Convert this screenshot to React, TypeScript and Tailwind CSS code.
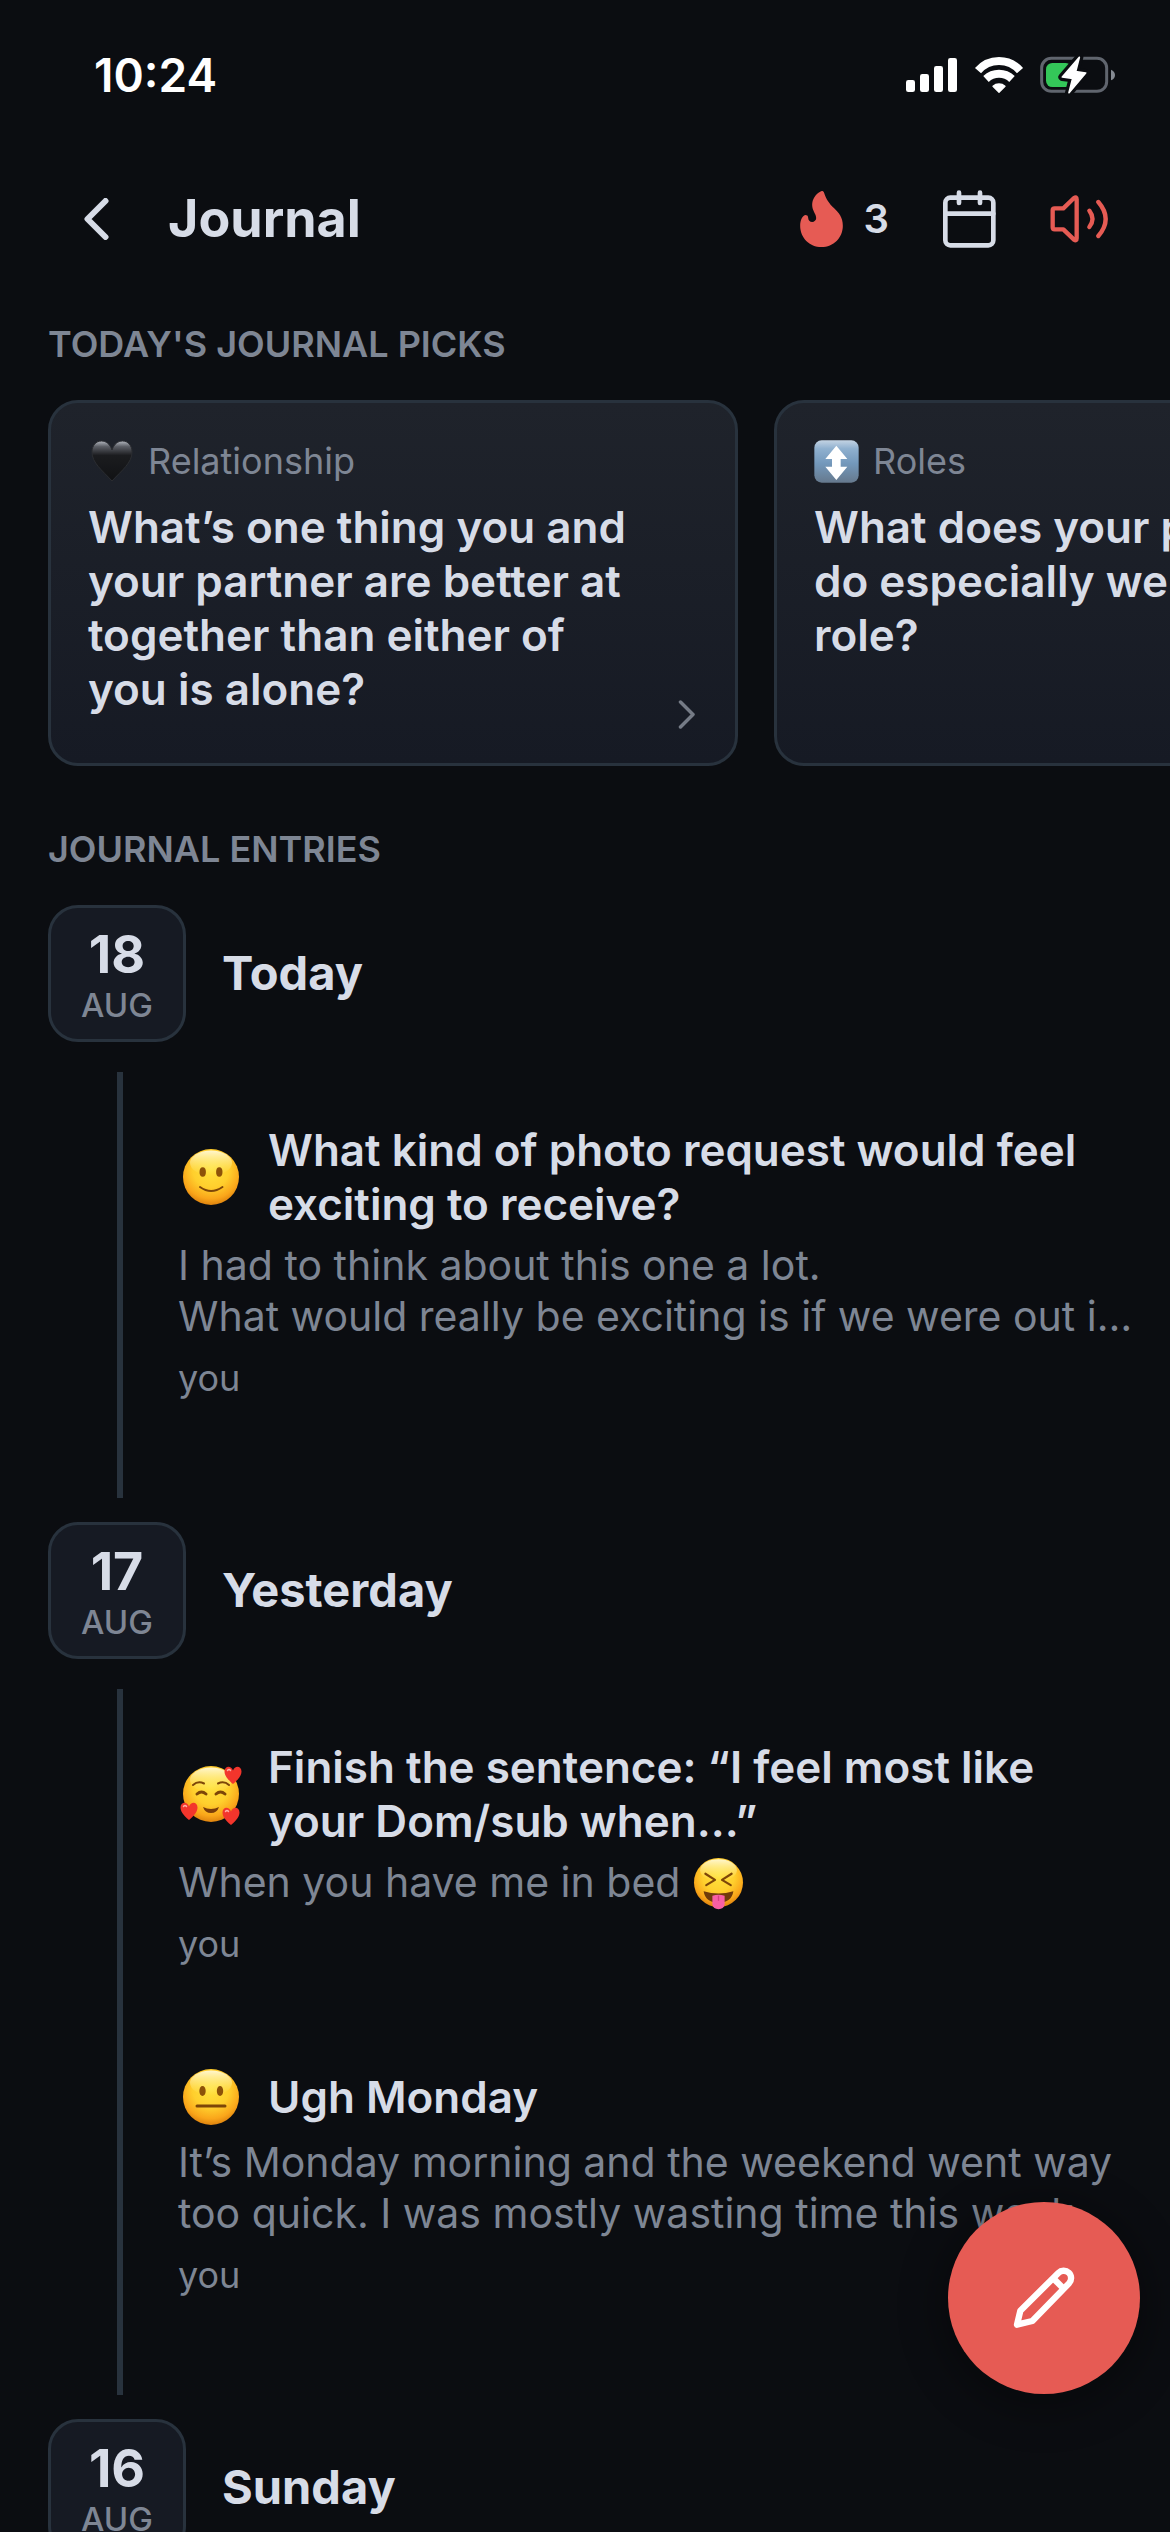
import React from 'react';

type Mood = 'smile' | 'loved' | 'neutral' | 'tongue';

interface Entry {
  mood: Mood;
  title: string[];
  body: string[];
  trailing?: Mood;
  author: string;
}

interface Day {
  day: string;
  month: string;
  label: string;
  entries: Entry[];
}

const DAYS: Day[] = [
  {
    day: '18',
    month: 'AUG',
    label: 'Today',
    entries: [
      {
        mood: 'smile',
        title: ['What kind of photo request would feel', 'exciting to receive?'],
        body: ['I had to think about this one a lot.', 'What would really be exciting is if we were out i…'],
        author: 'you',
      },
    ],
  },
  {
    day: '17',
    month: 'AUG',
    label: 'Yesterday',
    entries: [
      {
        mood: 'loved',
        title: ['Finish the sentence: “I feel most like', 'your Dom/sub when...”'],
        body: ['When you have me in bed'],
        trailing: 'tongue',
        author: 'you',
      },
      {
        mood: 'neutral',
        title: ['Ugh Monday'],
        body: ['It’s Monday morning and the weekend went way', 'too quick. I was mostly wasting time this week.'],
        author: 'you',
      },
    ],
  },
  { day: '16', month: 'AUG', label: 'Sunday', entries: [] },
];

const PICKS = [
  {
    icon: 'heart',
    category: 'Relationship',
    lines: ['What’s one thing you and', 'your partner are better at', 'together than either of', 'you is alone?'],
  },
  {
    icon: 'arrows',
    category: 'Roles',
    lines: ['What does your partner', 'do especially well in their', 'role?'],
  },
];

const StatusIcons = () => (
  <div className="flex items-center gap-[17px]">
    <svg width="51" height="36" viewBox="0 0 153 108" fill="#fff" aria-hidden="true">
      <rect x="0" y="69" width="27" height="36" rx="7" />
      <rect x="42" y="51" width="27" height="54" rx="7" />
      <rect x="84" y="27" width="27" height="78" rx="7" />
      <rect x="126" y="3" width="27" height="102" rx="7" />
    </svg>
    <svg width="49" height="36" viewBox="642 105 147 108" className="overflow-visible" aria-hidden="true">
      <g fill="none" stroke="#fff" strokeWidth="24">
        <path d="M654 146A83 83 0 0 1 780 146" />
        <path d="M678 171A57 57 0 0 1 756 171" />
      </g>
      <path d="M717 211L699 193A27 27 0 0 1 735 193Z" fill="#fff" stroke="#fff" strokeWidth="4" strokeLinejoin="round" />
    </svg>
    <svg width="76" height="40" viewBox="840 102 228 120" aria-hidden="true">
      <rect x="845" y="112" width="195" height="99" rx="29" fill="none" stroke="#60656e" strokeWidth="9" />
      <path d="M1053 146c8 3 12 9 12 16s-4 13-12 16z" fill="#858a93" />
      <rect x="858" y="126" width="78" height="72" rx="19" fill="#34c759" />
      <path
        d="M958 109L907 168L938 172L927 215L977 156L947 152Z"
        fill="#0b0d11"
        stroke="#0b0d11"
        strokeWidth="24"
        strokeLinejoin="round"
      />
      <path
        d="M958 109L907 168L938 172L927 215L977 156L947 152Z"
        fill="#fff"
        stroke="#fff"
        strokeWidth="5"
        strokeLinejoin="round"
      />
    </svg>
  </div>
);

const FlameIcon = () => (
  <svg width="43" height="56" viewBox="112 518 128 168" fill="#e65b54" aria-hidden="true">
    <path d="M172 520C158 528 148 542 148 560C148 578 160 586 160 600C160 606 154 611 148 611C141 611 136 605 136 598C136 592 132 590 127 590C119 592 112 606 112 622C112 658 140 686 176 686C212 686 240 658 240 622C240 598 228 583 214 570C198 555 190 542 184 524C182 518 177 517 172 520Z" />
  </svg>
);

const CalendarIcon = () => (
  <svg
    width="53"
    height="58"
    viewBox="543 512 159 174"
    fill="none"
    stroke="#d7dce7"
    strokeWidth="14"
    strokeLinecap="round"
    aria-hidden="true"
  >
    <rect x="550" y="535" width="144" height="143" rx="15" />
    <path d="M550 583H694M591 520V551M654 520V551" />
  </svg>
);

const SpeakerIcon = () => (
  <svg
    width="59"
    height="48"
    viewBox="868 527 177 144"
    fill="none"
    stroke="#e65b54"
    strokeWidth="13"
    strokeLinecap="round"
    strokeLinejoin="round"
    aria-hidden="true"
  >
    <path d="M882 567H908L940 536Q948 531 948 540V657Q948 666 940 661L908 630H882Q876 630 876 624V573Q876 567 882 567Z" />
    <path d="M986 574Q1005 599 986 623" />
    <path d="M1013 548Q1057 599 1013 650" />
  </svg>
);

const PencilIcon = () => (
  <svg
    width="62"
    height="62"
    viewBox="459 381 186 186"
    fill="none"
    stroke="#fff"
    strokeWidth="19"
    strokeLinecap="round"
    strokeLinejoin="round"
    aria-hidden="true"
  >
    <path d="M471 554L481 512L595 399A22 22 0 0 1 627 430L517 543Z" />
    <path d="M581 416L609 444" strokeLinecap="butt" />
  </svg>
);

const HeartEmoji = () => (
  <svg width="46" height="44" viewBox="0 0 46 44" aria-hidden="true">
    <defs>
      <linearGradient id="heart" x1="0" y1="0" x2="0" y2="1">
        <stop offset="0" stopColor="#b4b8c0" />
        <stop offset="0.14" stopColor="#5b5e65" />
        <stop offset="0.36" stopColor="#1b1c1f" />
        <stop offset="1" stopColor="#111214" />
      </linearGradient>
    </defs>
    <path
      d="M24 11C22 5 18 2 13.500 2C8 2 4 6.500 4 13C4 24 14 31 24 42C34 31 44 24 44 13C44 6.500 40 2 34.500 2C30 2 26 5 24 11Z"
      fill="url(#heart)"
      stroke="#2b2d31"
      strokeWidth="1"
    />
  </svg>
);

const ArrowsEmoji = () => (
  <svg width="45" height="43" viewBox="228 177 135 129" aria-hidden="true">
    <defs>
      <linearGradient id="arrows" x1="0" y1="0" x2="0" y2="1">
        <stop offset="0" stopColor="#c3d3e3" />
        <stop offset="0.2" stopColor="#8fb0cf" />
        <stop offset="0.55" stopColor="#7398bb" />
        <stop offset="1" stopColor="#66798d" />
      </linearGradient>
    </defs>
    <rect x="229" y="178" width="133" height="127" rx="22" fill="url(#arrows)" />
    <path d="M295 194L328 234H308V257H328L295 297L262 257H282V234H262Z" fill="#fff" />
  </svg>
);

const heartPath = 'M0 9C-6 4-8.500 0-8.500-3.500C-8.500-9-2-10 0-4.500C2-10 8.500-9 8.500-3.500C8.500 0 6 4 0 9Z';

const FaceEmoji = ({ mood, size }: { mood: Mood; size: number }) => {
  const fill = `face-${mood}`;
  return (
    <svg width={size} height={size} viewBox="0 0 56 56" className="shrink-0 overflow-visible" aria-hidden="true">
      <defs>
        <radialGradient id={fill} cx="0.5" cy="0.36" r="0.66">
          <stop offset="0" stopColor="#ffe23e" />
          <stop offset="0.5" stopColor="#ffcf2d" />
          <stop offset="0.8" stopColor="#faa61a" />
          <stop offset="1" stopColor="#d97c0c" />
        </radialGradient>
        <linearGradient id={`${fill}-shine`} x1="0" y1="0" x2="0" y2="1">
          <stop offset="0" stopColor="#fffbe0" stopOpacity="0.9" />
          <stop offset="1" stopColor="#fff176" stopOpacity="0" />
        </linearGradient>
      </defs>
      <circle cx="28" cy="28" r="28" fill={`url(#${fill})`} />
      <ellipse cx="28" cy="14" rx="21" ry="12.500" fill={`url(#${fill}-shine)`} />
      {mood === 'smile' && (
        <>
          <ellipse cx="19.700" cy="23" rx="3.200" ry="4.700" fill="#8d5208" />
          <ellipse cx="36.300" cy="23" rx="3.200" ry="4.700" fill="#8d5208" />
          <path d="M17 38Q28 46 39.500 38" fill="none" stroke="#7d4608" strokeWidth="2" strokeLinecap="round" />
        </>
      )}
      {mood === 'neutral' && (
        <>
          <ellipse cx="19.500" cy="22" rx="3.200" ry="5" fill="#8d5208" />
          <ellipse cx="37" cy="22" rx="3.200" ry="5" fill="#8d5208" />
          <path d="M14 37H42" stroke="#7d4608" strokeWidth="3" strokeLinecap="round" />
        </>
      )}
      {mood === 'loved' && (
        <>
          <g fill="none" stroke="#7d4608" strokeLinecap="round">
            <path d="M10 19Q15 14.500 21 17.500M35 17.500Q41 14.500 46 19" strokeWidth="2" />
            <path d="M14 28Q18.500 24 23 28M33 28Q37.500 24 42 28" strokeWidth="3" />
          </g>
          <path d="M20 41Q28 45 36 41Q34 47 28 47Q22 47 20 41Z" fill="#7a3c0a" />
          {[
            [50, 9],
            [6, 45],
            [48, 50],
          ].map(([x, y]) => (
            <g key={x} transform={`translate(${x} ${y})`}>
              <path d={heartPath} fill="#f3352c" />
              <path d="M-5.500-4.500Q-4-6.500-2.500-4.500" stroke="#ffb0a8" strokeWidth="1.500" fill="none" strokeLinecap="round" />
            </g>
          ))}
        </>
      )}
      {mood === 'tongue' && (
        <>
          <path
            d="M13 18L24 25L14 31M43 18L32 25L42 31"
            fill="none"
            stroke="#7d4608"
            strokeWidth="2.500"
            strokeLinecap="round"
            strokeLinejoin="round"
          />
          <path d="M11 38Q28 43 45 38Q43 51 28 51Q13 51 11 38Z" fill="#6f3a0a" />
          <path d="M21 43Q28 41 35 43V53Q34 58 28 58.500Q22 58 21 53Z" fill="#f85fa4" />
          <path d="M28 43V49" stroke="#d63f80" strokeWidth="1.500" />
        </>
      )}
    </svg>
  );
};

const SectionTitle = ({ children }: { children: React.ReactNode }) => (
  <h2 className="px-12 text-[36px] leading-[48px] font-semibold text-[#7e8694]">{children}</h2>
);

const EntryItem = ({ entry }: { entry: Entry }) => (
  <li className="pt-[51px] pb-12">
    <article>
      <div className="flex min-h-[63px] items-center gap-[29px] pl-[5px]">
        <FaceEmoji mood={entry.mood} size={56} />
        <h4 className="text-[44px] leading-[54px] font-semibold whitespace-nowrap text-[#d7dce7]">
          {entry.title.map((line) => (
            <span key={line} className="block">
              {line}
            </span>
          ))}
        </h4>
      </div>
      <div className="mt-[9px] text-[41px] leading-[51px] whitespace-nowrap text-[#7e8694]">
        {entry.body.map((line) => (
          <p key={line} className="flex items-center gap-[14px]">
            {line}
            {entry.trailing && <FaceEmoji mood={entry.trailing} size={49} />}
          </p>
        ))}
      </div>
      <p className="mt-[14px] text-[36px] leading-[44px] text-[#7e8694]">{entry.author}</p>
    </article>
  </li>
);

const App: React.FC = () => {
  return (
    <div className="relative flex h-screen flex-col overflow-hidden bg-[#0b0d11] font-['Inter','Liberation_Sans',sans-serif] text-[#d7dce7]">
      <div className="flex h-[150px] shrink-0 items-center justify-between pr-[54px] pl-[94px] text-white">
        <span className="text-[46px] font-semibold">10:24</span>
        <StatusIcons />
      </div>

      <header className="flex h-[138px] shrink-0 items-center justify-between pr-[61px] pl-[84px]">
        <div className="flex items-center gap-[59px]">
          <button type="button" aria-label="Back">
            <svg width="25" height="42" viewBox="0 0 25 42" fill="none" stroke="#d7dce7" strokeWidth="6" strokeLinecap="round" strokeLinejoin="round">
              <path d="M21.500 3L3.500 21L21.500 39" />
            </svg>
          </button>
          <h1 className="text-[52px] font-bold">Journal</h1>
        </div>
        <div className="flex items-center gap-[54px]">
          <div className="flex items-center gap-[21px]">
            <FlameIcon />
            <span className="text-[40px] font-semibold">3</span>
          </div>
          <button type="button" aria-label="Calendar">
            <CalendarIcon />
          </button>
          <button type="button" aria-label="Sound">
            <SpeakerIcon />
          </button>
        </div>
      </header>

      <main className="flex-1">
        <section className="pt-8">
          <SectionTitle>TODAY'S JOURNAL PICKS</SectionTitle>
          <div className="mt-8 flex gap-9 overflow-hidden pl-12">
            {PICKS.map((pick) => (
              <button
                key={pick.category}
                type="button"
                className="flex h-[366px] w-[690px] shrink-0 items-end justify-between rounded-[30px] border-3 border-[#28323d] bg-linear-to-b from-[#1f232b] to-[#161a24] pt-[34px] pr-10 pb-[34px] pl-[37px] text-left"
              >
                <span className="flex flex-col gap-[15px] self-start">
                  <span className="flex h-12 items-center gap-[14px] text-[36px] text-[#7e8694]">
                    {pick.icon === 'heart' ? <HeartEmoji /> : <ArrowsEmoji />}
                    {pick.category}
                  </span>
                  <span className="text-[44px] leading-[54px] font-semibold whitespace-nowrap">
                    {pick.lines.map((line) => (
                      <span key={line} className="block">
                        {line}
                      </span>
                    ))}
                  </span>
                </span>
                <svg width="17" height="29" viewBox="0 0 17 29" fill="none" stroke="#757b86" strokeWidth="3.500" strokeLinecap="round" strokeLinejoin="round" aria-hidden="true">
                  <path d="M2.500 2L15 14.500L2.500 27" />
                </svg>
              </button>
            ))}
          </div>
        </section>

        <section className="pt-[59px]">
          <SectionTitle>JOURNAL ENTRIES</SectionTitle>
          <div className="mt-8 flex flex-col gap-6 px-12">
            {DAYS.map((day) => (
              <div key={day.day}>
                <div className="flex items-center gap-9">
                  <div className="flex h-[137px] w-[138px] flex-col items-center justify-center rounded-[30px] border-3 border-[#28323d] bg-[#161a23] pt-2">
                    <span className="text-[52px] leading-[54px] font-bold">{day.day}</span>
                    <span className="text-[33px] leading-[46px] font-medium text-[#7e8694]">{day.month}</span>
                  </div>
                  <h3 className="text-[47px] font-bold">{day.label}</h3>
                </div>
                {day.entries.length > 0 && (
                  <ul className="mt-[30px] ml-[69px] border-l-6 border-[#28323d] pb-[50px] pl-[55px]">
                    {day.entries.map((entry) => (
                      <EntryItem key={entry.title[0]} entry={entry} />
                    ))}
                  </ul>
                )}
              </div>
            ))}
          </div>
        </section>
      </main>

      <button
        type="button"
        aria-label="New entry"
        className="absolute right-[30px] bottom-[138px] flex size-48 items-center justify-center rounded-full bg-[#e65b54] shadow-[0_8px_40px_10px_rgba(0,0,0,0.3)]"
      >
        <PencilIcon />
      </button>
    </div>
  );
};

export default App;
